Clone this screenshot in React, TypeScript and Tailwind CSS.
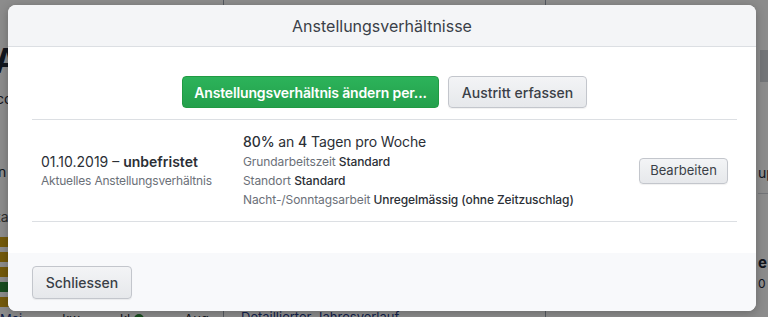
import React from "react";

const font = { fontFamily: 'Inter, "Liberation Sans", Arial, sans-serif' };

function Background() {
  return (
    <div className="absolute inset-0 flex bg-white text-[#1f2937]">
      <div className="flex w-[223px] flex-col">
        <div className="ml-[-6px] mt-[44px] text-[34px] font-bold leading-none">A</div>
        <div className="ml-[-4px] mt-[10px] text-[14px]">co</div>
        <div className="ml-[-2px] mt-[52px] text-[14px]">n</div>
        <div className="mt-[14px] h-px w-[30px] bg-[#d1d5db]" />
        <div className="ml-[-4px] mt-[10px] text-[14px] text-[#555]">ta</div>
        <div className="mt-[10px] flex w-[20px] flex-col gap-[5px]">
          <div className="h-[10px] bg-[#d4a514]" />
          <div className="h-[10px] bg-[#d4a514]" />
          <div className="h-[10px] bg-[#d4a514]" />
          <div className="h-[10px] bg-[#2e8b3a]" />
          <div className="h-[10px] bg-[#d4a514]" />
        </div>
        <div className="mt-[4px] flex items-center gap-[40px] text-[13px] leading-[16px]">
          <span className="text-[#1e3a8a]">Mai</span>
          <span>kw</span>
          <span className="flex items-center gap-1">
            kl <span className="h-[10px] w-[10px] rounded-full bg-[#2e8b3a]" />
          </span>
          <span>Aug</span>
        </div>
      </div>
      <div className="flex w-[323px] flex-col justify-end border-x border-[#9ca3af] pl-[17px]">
        <div className="mb-[-8px] text-[13px] leading-[16px] text-[#1e3a8a] underline">Detaillierter Jahresverlauf</div>
      </div>
      <div className="flex flex-1 flex-col items-end">
        <div className="mt-[50px] h-[32px] w-[8px] bg-[#d1d5db]" />
        <div className="mt-[80px] w-[10px] overflow-hidden text-[14px]">up</div>
        <div className="mt-[10px] h-px w-[10px] bg-[#d1d5db]" />
        <div className="mt-[58px] w-[10px] text-[15px] font-bold">e</div>
        <div className="w-[10px] text-[12px]">0</div>
      </div>
      <div className="absolute inset-0 bg-black/45" />
    </div>
  );
}

function GreyButton({ children, className = "" }: { children: React.ReactNode; className?: string }) {
  return (
    <button
      className={
        "rounded-[4px] border border-[#c3c6cc] bg-gradient-to-b from-[#f3f4f6] to-[#e6e8eb] text-[#3a3f47] shadow-[0_1px_1px_rgba(0,0,0,0.06)] " +
        className
      }
    >
      {children}
    </button>
  );
}

export default function App() {
  return (
    <div className="relative h-[317px] w-[768px] overflow-hidden" style={font}>
      <Background />
      <div className="absolute left-[8px] top-[5px] flex h-[306px] w-[748px] flex-col overflow-hidden rounded-[8px] bg-white shadow-[0_2px_10px_rgba(0,0,0,0.25)]">
        <div className="flex h-[42px] items-center justify-center border-b border-[#dcdfe3] bg-[#f4f5f7] text-[16px] text-[#3a3f48]">
          Anstellungsverhältnisse
        </div>
        <div className="flex flex-1 flex-col pl-[24px] pr-[19px]">
          <div className="flex justify-center gap-[9px] pt-[29px] pb-[11px]">
            <button className="h-[32px] w-[257px] rounded-[4px] border border-[#219a43] bg-gradient-to-b from-[#2cb35a] to-[#24a04c] text-[14px] font-semibold tracking-[-0.15px] text-white">
              Anstellungsverhältnis ändern per...
            </button>
            <GreyButton className="h-[32px] w-[139px] text-[14px] font-medium">Austritt erfassen</GreyButton>
          </div>
          <div className="flex items-center border-y border-[#dcdfe3] py-[12px]">
            <div className="w-[211px] pl-[9px]">
              <div className="text-[14px] leading-[20px] text-[#2b2f36]">
                01.10.2019 – <span className="font-semibold">unbefristet</span>
              </div>
              <div className="text-[12px] leading-[18px] tracking-[-0.2px] text-[#6b7078]">Aktuelles Anstellungsverhältnis</div>
            </div>
            <div className="flex-1 tracking-[-0.1px]">
              <div className="text-[14px] leading-[20px] text-[#2b2f36]">
                <span className="font-medium">80%</span> an <span className="font-medium">4</span> Tagen pro Woche
              </div>
              <div className="text-[12px] leading-[19px] text-[#6b7078]">
                Grundarbeitszeit <span className="font-medium text-[#2b2f36]">Standard</span>
              </div>
              <div className="text-[12px] leading-[19px] text-[#6b7078]">
                Standort <span className="font-medium text-[#2b2f36]">Standard</span>
              </div>
              <div className="text-[12px] leading-[19px] text-[#6b7078]">
                Nacht-/Sonntagsarbeit <span className="font-medium text-[#2b2f36]">Unregelmässig (ohne Zeitzuschlag)</span>
              </div>
            </div>
            <GreyButton className="mr-[9px] h-[26px] w-[89px] text-[13px]">Bearbeiten</GreyButton>
          </div>
        </div>
        <div className="flex h-[58px] items-center bg-[#f8f9fb] px-[24px]">
          <GreyButton className="h-[33px] w-[100px] text-[14px] font-medium">Schliessen</GreyButton>
        </div>
      </div>
    </div>
  );
}
